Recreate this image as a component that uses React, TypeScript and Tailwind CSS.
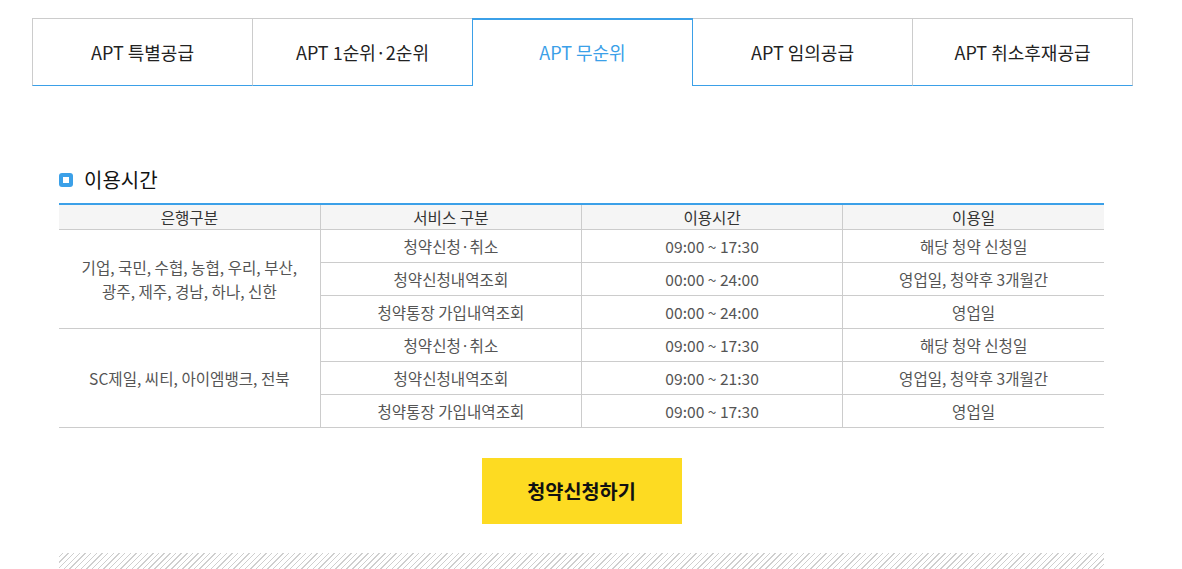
import React from "react";

const tabs = ["APT 특별공급", "APT 1순위·2순위", "APT 무순위", "APT 임의공급", "APT 취소후재공급"];

type Row = { svc: string; time: string; day: string };
const groups: { bank: React.ReactNode; rows: Row[] }[] = [
  {
    bank: (
      <>
        기업, 국민, 수협, 농협, 우리, 부산,
        <br />
        광주, 제주, 경남, 하나, 신한
      </>
    ),
    rows: [
      { svc: "청약신청·취소", time: "09:00 ~ 17:30", day: "해당 청약 신청일" },
      { svc: "청약신청내역조회", time: "00:00 ~ 24:00", day: "영업일, 청약후 3개월간" },
      { svc: "청약통장 가입내역조회", time: "00:00 ~ 24:00", day: "영업일" },
    ],
  },
  {
    bank: <>SC제일, 씨티, 아이엠뱅크, 전북</>,
    rows: [
      { svc: "청약신청·취소", time: "09:00 ~ 17:30", day: "해당 청약 신청일" },
      { svc: "청약신청내역조회", time: "09:00 ~ 21:30", day: "영업일, 청약후 3개월간" },
      { svc: "청약통장 가입내역조회", time: "09:00 ~ 17:30", day: "영업일" },
    ],
  },
];

export default function App() {
  return (
    <div
      className="w-[1182px] h-[569px] overflow-hidden bg-white"
      style={{ fontFamily: '"Noto Sans CJK KR", "Noto Sans", sans-serif' }}
    >
      <div className="pt-[18px] pl-[32px]">
        <div className="flex w-[1101px]">
          {tabs.map((t, i) => {
            const active = i === 2;
            return (
              <div
                key={t}
                className={
                  "h-[68px] w-[221px] shrink-0 flex items-center justify-center text-[18px] " +
                  (i > 0 ? "-ml-px " : "") +
                  (active
                    ? "border-x border-t-2 border-[#3ba0e8] border-b-0 text-[#3ba0e8] relative z-10 bg-white"
                    : "border border-[#cccccc] border-b-[#3ba0e8] text-[#222]")
                }
              >
                <span className={active ? "-mt-[2px]" : ""}>{t}</span>
              </div>
            );
          })}
        </div>
      </div>

      <div className="ml-[59px] w-[1045px] mt-[83px]">
        <div className="flex items-center h-[22px]">
          <span className="w-[14px] h-[14px] rounded-[3px] bg-[#3ba0e8] flex items-center justify-center">
            <span className="w-[6px] h-[6px] bg-white" />
          </span>
          <span className="ml-[11px] text-[20px] text-[#111] leading-none">이용시간</span>
        </div>

        <table className="mt-[12px] w-full border-collapse table-fixed text-[15.6px] text-[#555] border-t-2 border-[#3ba0e8]">
          <thead>
            <tr className="bg-[#f5f5f5] h-[25px] text-[#333]">
              {["은행구분", "서비스 구분", "이용시간", "이용일"].map((h, i) => (
                <th
                  key={h}
                  className={
                    "font-normal border-b border-[#cccccc] p-0 leading-[16px] " +
                    (i < 3 ? "border-r" : "")
                  }
                >
                  {h}
                </th>
              ))}
            </tr>
          </thead>
          <tbody>
            {groups.map((g, gi) =>
              g.rows.map((r, ri) => (
                <tr key={gi + "-" + ri} className="h-[33px]">
                  {ri === 0 && (
                    <td
                      rowSpan={3}
                      className="text-center border-b border-r border-[#cccccc] leading-[24px] p-0"
                    >
                      {g.bank}
                    </td>
                  )}
                  <td className="text-center border-b border-r border-[#cccccc] p-0 leading-[20px]">{r.svc}</td>
                  <td className="text-center border-b border-r border-[#cccccc] p-0 leading-[20px]">{r.time}</td>
                  <td className="text-center border-b border-[#cccccc] p-0 leading-[20px]">{r.day}</td>
                </tr>
              ))
            )}
          </tbody>
        </table>

        <div className="flex justify-center mt-[30px]">
          <button className="w-[200px] h-[66px] bg-[#fddb22] text-[19.7px] font-bold text-[#111]">
            청약신청하기
          </button>
        </div>

        <div
          className="mt-[29px] h-[16px] w-full"
          style={{
            backgroundImage:
              "repeating-linear-gradient(-45deg, transparent 0px, transparent 3px, #cfcfcf 3px, #cfcfcf 4px)",
          }}
        />
      </div>
    </div>
  );
}
